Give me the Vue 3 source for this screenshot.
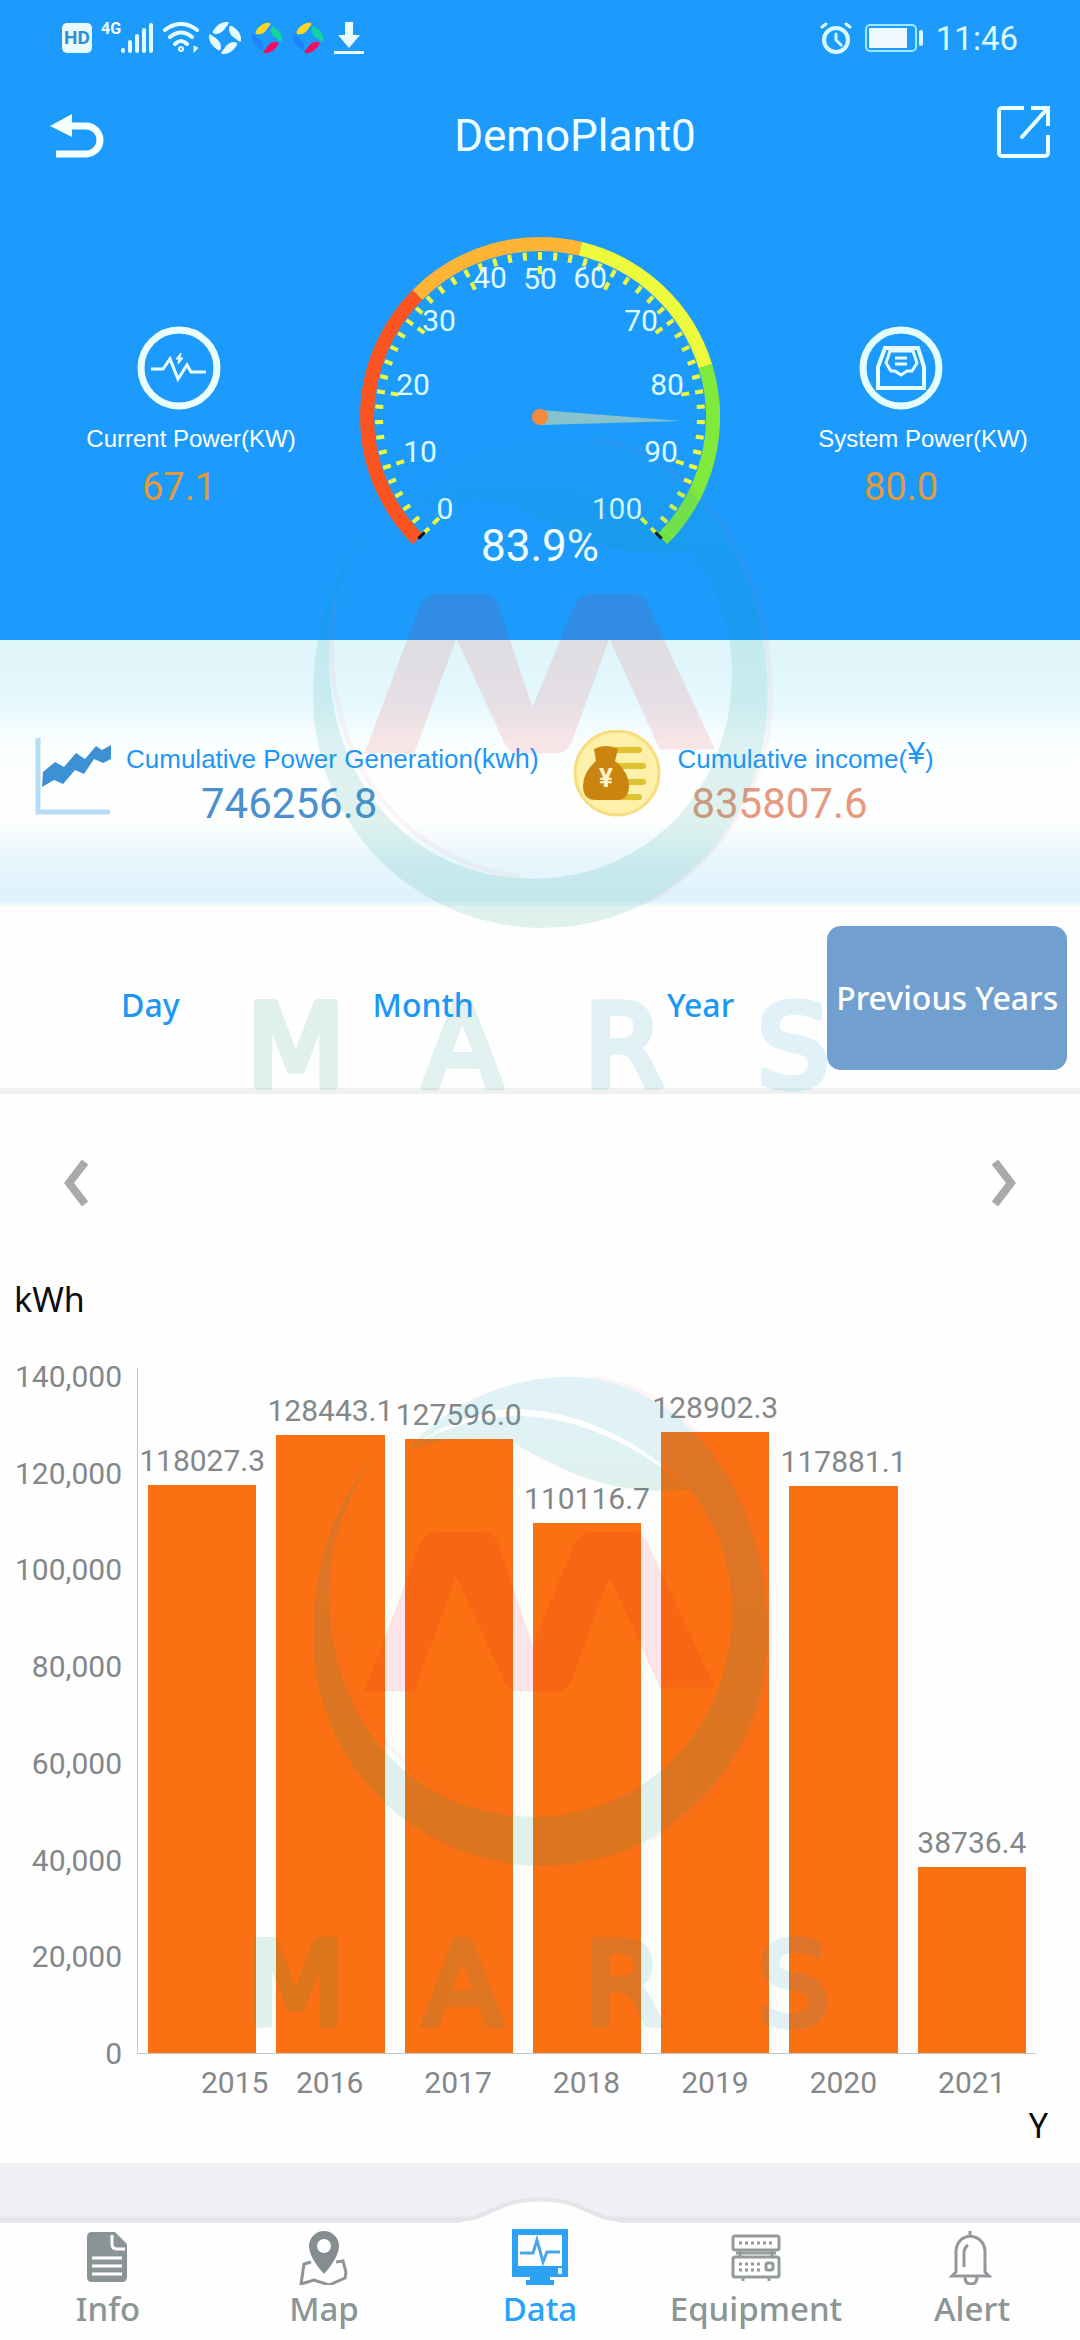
<script setup>
import { ref } from 'vue'

const tabs = ['Day', 'Month', 'Year', 'Previous Years']
const activeTab = ref('Previous Years')

const chartMax = 140000
const axisTicks = ['140,000', '120,000', '100,000', '80,000', '60,000', '40,000', '20,000', '0']
const years = [
  { year: '2015', value: 118027.3 },
  { year: '2016', value: 128443.1 },
  { year: '2017', value: 127596.0 },
  { year: '2018', value: 110116.7 },
  { year: '2019', value: 128902.3 },
  { year: '2020', value: 117881.1 },
  { year: '2021', value: 38736.4 },
]
const barHeight = (value) => ({ height: (value / chartMax) * 100 + '%' })

// Gauge geometry: 270 degrees from 0 (lower left) to 100 (lower right)
const centre = { x: 540, y: 417 }
function point(value, radius) {
  const a = ((value * 2.7 - 225) * Math.PI) / 180
  return [(centre.x + radius * Math.cos(a)).toFixed(1), (centre.y + radius * Math.sin(a)).toFixed(1)]
}
function arc(from, to) {
  const large = (to - from) * 2.7 > 180 ? 1 : 0
  return `M${point(from, 173)} A173 173 0 ${large} 1 ${point(to, 173)}`
}
function spoke(value, inner, outer) {
  return `M${point(value, outer)} L${point(value, inner)}`
}
const arcs = [
  { d: arc(0, 33.3), color: '#fc5420' },
  { d: arc(33.3, 55), color: '#ffb436' },
  { d: arc(55, 77), color: '#eefa3c' },
  { d: arc(77, 100), color: '#7fea3c' },
]
const minorTicks = Array.from({ length: 51 }, (_, i) => i * 2).filter((v) => v % 10).map((v) => spoke(v, 157, 165))
const majorTicks = Array.from({ length: 11 }, (_, i) => spoke(i * 10, 142, 165))
const endTicks = [spoke(0, 163, 172), spoke(100, 163, 172)]
const gaugeLabels = [
  [445, 519, 0], [420, 462, 10], [413, 395, 20], [439, 331, 30], [490, 288, 40], [540, 289, 50],
  [590, 288, 60], [641, 331, 70], [667, 395, 80], [661, 462, 90], [617, 519, 100],
]

const watermarks = ['first', 'second']
</script>

<template>
  <div class="screen">
    <header class="hero">
      <div class="status">
        <div class="status-left">
          <span class="hd">HD</span>
          <span class="net">4G</span>
          <svg width="33" height="32" viewBox="0 0 33 32" stroke="#e4fbff" stroke-width="4" stroke-linecap="round">
            <path d="M2 28v1M9 20v9M16 14v15M23 8v21M30 3v26" />
          </svg>
          <svg width="36" height="32" viewBox="0 0 36 32" fill="none" stroke="#e4fbff" stroke-width="4" stroke-linecap="round">
            <path d="M2 8Q18-4 34 8M7 15Q18 6 29 15M12 22Q18 16 24 22" />
            <circle cx="18" cy="27" r="1" />
            <path d="M31 30v-6l4 2-4 4" stroke-width="1" fill="#e4fbff" />
          </svg>
          <svg width="34" height="34" viewBox="0 0 34 34" fill="#e4fbff">
            <path d="M5 10Q11 0 20 1Q22 2 18 6Q14 13 8 13Q4 13 5 10Z" />
            <path d="M24 5Q34 11 33 20Q32 22 28 18Q21 14 21 8Q21 4 24 5Z" />
            <path d="M29 24Q23 34 14 33Q12 32 16 28Q20 21 26 21Q30 21 29 24Z" />
            <path d="M10 29Q0 23 1 14Q2 12 6 16Q13 20 13 26Q13 30 10 29Z" />
          </svg>
          <svg v-for="n in 2" :key="n" width="32" height="34" viewBox="0 0 34 34">
            <path fill="#fdd722" d="M5 10Q11 0 20 1Q22 2 18 6Q14 13 8 13Q4 13 5 10Z" />
            <path fill="#12d69c" d="M24 5Q34 11 33 20Q32 22 28 18Q21 14 21 8Q21 4 24 5Z" />
            <path fill="#f50d5b" d="M29 24Q23 34 14 33Q12 32 16 28Q20 21 26 21Q30 21 29 24Z" />
            <path fill="#1c84ff" d="M10 29Q0 23 1 14Q2 12 6 16Q13 20 13 26Q13 30 10 29Z" />
          </svg>
          <svg width="32" height="32" viewBox="0 0 32 32" fill="#e9fbff">
            <path d="M12 0h8v13h7L16 26 5 13h7zM1 29h30v3H1z" />
          </svg>
        </div>
        <div class="status-right">
          <svg width="32" height="32" viewBox="0 0 32 32" fill="none" stroke="#d8faff" stroke-width="4" stroke-linecap="round">
            <circle cx="16" cy="18" r="12" />
            <path d="M16 12v6l5 5M2 5l4-3M30 5l-4-3" stroke-width="3" />
          </svg>
          <svg width="58" height="28" viewBox="0 0 58 28" fill="none">
            <rect x="1" y="1" width="50" height="26" rx="4" stroke="#9fe6ff" stroke-width="2" />
            <rect x="4" y="4" width="38" height="20" fill="#edf9ff" />
            <rect x="54" y="6" width="4" height="16" rx="2" fill="#d8faff" />
          </svg>
          <span>11:46</span>
        </div>
      </div>

      <div class="title-bar">
        <button type="button" aria-label="Back">
          <svg width="54" height="44" viewBox="0 0 54 44">
            <path d="M0 12 22 0v23z" fill="#f4ffff" />
            <path d="M20 12h16a14 14 0 0 1 0 28H6" fill="none" stroke="#f4ffff" stroke-width="7" />
          </svg>
        </button>
        <h1>DemoPlant0</h1>
        <button type="button" class="share" aria-label="Share">
          <svg width="54" height="54" viewBox="0 0 54 54" fill="none" stroke="#eaffff" stroke-width="4">
            <path d="M28 3H6a3 3 0 0 0-3 3v42a3 3 0 0 0 3 3h43a3 3 0 0 0 3-3V30M35 3h17v18" />
            <path d="M51 4 26 32" stroke-linecap="round" />
          </svg>
        </button>
      </div>

      <div class="overview">
        <section class="metric">
          <svg width="84" height="84" viewBox="0 0 84 84" fill="none" stroke="#ecffff">
            <circle cx="42" cy="42" r="38" stroke-width="7" />
            <path d="M14 43h12l7-10 8 20 9-14 4 7h15" stroke-width="3" />
            <path d="M44 27l-5 6h3l-1 5 5-6h-3z" fill="#ecffff" stroke-width="1" />
          </svg>
          <span class="metric-label">Current Power(KW)</span>
          <strong>67.1</strong>
        </section>

        <svg class="gauge" viewBox="358 220 364 360" role="img" aria-label="Load 83.9%">
          <path v-for="a in arcs" :key="a.d" :d="a.d" :stroke="a.color" fill="none" stroke-width="14" />
          <path v-for="d in minorTicks" :key="d" :d="d" class="tick" />
          <path v-for="d in majorTicks" :key="d" :d="d" class="tick major" />
          <path v-for="d in endTicks" :key="d" :d="d" stroke="#101010" stroke-width="3" />
          <text v-for="[x, y, value] in gaugeLabels" :key="value" :x="x" :y="y" class="scale">{{ value }}</text>
          <path d="M540 410 681 421 540 425z" fill="#86c3cc" />
          <circle cx="540" cy="417" r="8" fill="#f58a3c" />
          <text x="540" y="561" class="percent">83.9%</text>
        </svg>

        <section class="metric system">
          <svg width="84" height="84" viewBox="0 0 84 84" fill="none" stroke="#e4fdff">
            <circle cx="42" cy="42" r="38" stroke-width="7" />
            <path d="M26 22h33l6 19v21H19V41z" stroke-width="4" />
            <path d="M31 25h23l4 12-5 8h-5l-6 4-6-4h-4l-5-8z" stroke-width="3" />
            <path d="M36 32h12M36 38h12" stroke-width="3" />
          </svg>
          <span class="metric-label">System Power(KW)</span>
          <strong>80.0</strong>
        </section>
      </div>
    </header>

    <section class="totals">
      <div class="total generation">
        <svg width="90" height="90" viewBox="0 0 90 90">
          <path d="M14 8v74h72" fill="none" stroke="#b5dcf3" stroke-width="5" />
          <path d="M19 42l12-10 9 5 12-14 9 6 11-13 6 4 9-5v14l-8 4-9-4-10 15-9-4-12 14-9-4-12 7z" fill="#3d90d4" />
        </svg>
        <div class="total-text">
          <span class="total-label">Cumulative Power Generation<span class="unit">(kwh)</span></span>
          <strong>746256.8</strong>
        </div>
      </div>
      <div class="total income">
        <svg width="90" height="90" viewBox="0 0 90 90">
          <circle cx="45" cy="43" r="42" fill="#fdf0a8" stroke="#f8dc7d" stroke-width="3" />
          <path d="M44 20h23M44 36h27M44 52h27M44 67h23" stroke="#dfc232" stroke-width="6" stroke-linecap="round" />
          <path d="M22 19q12-6 24 0l-3 12q14 11 14 25 0 14-13 14H24q-13 0-13-14 0-14 13-25z" fill="#c98510" />
          <text x="34" y="57" class="coin-sign">¥</text>
        </svg>
        <div class="total-text">
          <span class="total-label">Cumulative income(<span class="yen">¥</span>)</span>
          <strong>835807.6</strong>
        </div>
      </div>
    </section>

    <nav class="tabs" aria-label="Period">
      <button
        v-for="tab in tabs"
        :key="tab"
        type="button"
        :class="{ active: tab === activeTab }"
        @click="activeTab = tab"
      >{{ tab }}</button>
    </nav>

    <main>
      <div class="pager">
        <button type="button" aria-label="Previous">
          <svg width="24" height="46" viewBox="0 0 24 46"><path d="M21 2 5 23l16 21" fill="none" stroke="#a8abab" stroke-width="8" /></svg>
        </button>
        <button type="button" aria-label="Next">
          <svg width="24" height="46" viewBox="0 0 24 46"><path d="M3 2l16 21L3 44" fill="none" stroke="#a8abab" stroke-width="8" /></svg>
        </button>
      </div>
      <div class="y-title">kWh</div>
      <div class="chart">
        <div class="y-axis"><span v-for="t in axisTicks" :key="t">{{ t }}</span></div>
        <div class="plot">
          <div v-for="item in years" :key="item.year" class="column">
            <span class="bar-value">{{ item.value.toFixed(1) }}</span>
            <div class="bar" :style="barHeight(item.value)"></div>
          </div>
        </div>
        <div class="x-axis"><span v-for="item in years" :key="item.year">{{ item.year }}</span></div>
      </div>
      <div class="x-title">Y</div>
    </main>

    <div class="band">
      <svg width="160" height="26" viewBox="0 0 160 32" preserveAspectRatio="none">
        <path d="M0 29C28 29 36 4 80 4s52 25 80 25v3H0z" fill="#fefefe" />
        <path d="M0 28C28 28 36 3 80 3s52 25 80 25" fill="none" stroke="#e4e4e9" stroke-width="5" />
      </svg>
    </div>

    <nav class="bottom" aria-label="Sections">
      <a href="#info">
        <svg width="56" height="56" viewBox="0 0 56 56">
          <path d="M12 3h23l12 12v33q0 5-5 5H12q-5 0-5-5V8q0-5 5-5z" fill="#8a9496" />
          <path d="M32 6v9q0 5 5 5h8M12 29h30M12 37h30M12 45h30" fill="none" stroke="#fff" stroke-width="3" />
        </svg>
        Info
      </a>
      <a href="#map">
        <svg width="56" height="56" viewBox="0 0 56 56">
          <path d="M28 45Q13 28 13 17a15 15 0 0 1 30 0q0 11-15 28zM28 10a7 7 0 1 0 0 14 7 7 0 0 0 0-14z" fill="#868d91" fill-rule="evenodd" />
          <path d="M15 33l-7 2-3 20 13-4 15 5 16-7 1-6-3-11-7 1" fill="none" stroke="#8f9498" stroke-width="3" />
        </svg>
        Map
      </a>
      <a href="#data" class="current" aria-current="page">
        <svg width="56" height="56" viewBox="0 0 56 56">
          <path d="M0 0h56v48H0zM6 6v31h44V6z" fill="#2da1f2" fill-rule="evenodd" />
          <path d="M14 51h28v5H14zM18 48h20v4H18z" fill="#2da1f2" />
          <path d="M8 24h13l4-13 6 22 4-10h13" fill="none" stroke="#4ba7e2" stroke-width="3" />
          <rect x="46" y="39" width="4" height="6" fill="#e8f6ff" />
        </svg>
        Data
      </a>
      <a href="#equipment">
        <svg width="56" height="56" viewBox="0 0 56 56" fill="none" stroke="#94999a" stroke-width="3">
          <rect x="5" y="7" width="46" height="14" rx="2" />
          <rect x="5" y="28" width="46" height="20" rx="2" />
          <path d="M12 21v7M44 21v7M8 24h40M15 48v4M41 48v4" />
          <path d="M11 14h36M11 35h22M11 41h22" stroke-dasharray="3 3" />
          <rect x="38" y="34" width="7" height="7" rx="2" />
        </svg>
        Equipment
      </a>
      <a href="#alert">
        <svg width="56" height="56" viewBox="0 0 56 56" fill="none" stroke="#94989c" stroke-width="3">
          <path d="M26 2v5M12 43V22Q13 9 26 7q14 2 15 15v21l4 4H8z" />
          <path d="M20 38V24q0-5 4-8M21 48q0 7 6 7t6-7" />
        </svg>
        Alert
      </a>
    </nav>

    <svg v-for="w in watermarks" :key="w" class="watermark" :class="w" viewBox="0 0 1568 1568" aria-hidden="true">
      <defs>
        <linearGradient :id="w + '-ring'" x1="0" y1="0" x2="0" y2="1">
          <stop offset="0" stop-color="#14a0c8" />
          <stop offset="1" stop-color="#009b71" />
        </linearGradient>
        <linearGradient :id="w + '-word'" x1="0" y1="0" x2="1" y2="0">
          <stop offset="0" stop-color="#0f9b60" />
          <stop offset="1" stop-color="#0f9bd8" />
        </linearGradient>
      </defs>
      <g opacity="0.12">
        <path
          :fill="`url(#${w}-ring)`"
          d="M425 255C330 360 290 500 290 640c0 290 230 505 500 505 280 0 490-225 490-505C1280 330 1090 80 850 80 700 80 570 150 495 240c65-50 145-85 225-90 140 0 260 60 350 138 10 10 25 22 40 37 60 75 92 165 92 265 0 260-192 448-432 448C500 1038 325 820 325 560c0-120 35-220 100-305z"
        />
        <path :fill="`url(#${w}-ring)`" d="M495 240c75-50 165-75 245-75 130 5 250 60 370 160-140 15-250-20-390-105-80-10-150-5-225 20z" />
        <path fill="#e6141e" fill-opacity="0.85" d="M402 765 522 445Q534 418 560 418H660Q684 418 694 445L768 665 858 445Q870 418 895 418H985Q1010 418 1020 445L1165 757H1045L935 515 855 735Q845 765 820 765H740Q715 765 705 740L602 515 510 765Z" />
        <path fill="none" stroke="#e66478" stroke-opacity="0.5" stroke-width="10" d="M900 82C1120 110 1286 350 1286 640c0 200-110 360-270 450M340 420C285 760 480 1000 740 1034" />
        <text class="wordmark" y="1490" :fill="`url(#${w}-word)`" :stroke="`url(#${w}-word)`">
          <tspan x="252">M</tspan><tspan x="615">A</tspan><tspan x="966">R</tspan><tspan x="1336">S</tspan>
        </text>
      </g>
    </svg>
  </div>
</template>

<style>
body {
  margin: 0;
  background: #fefefe;
}
</style>

<style scoped>
.screen {
  position: relative;
  overflow: hidden;
  background: #fefefe;
  font-family: Roboto, "Liberation Sans", sans-serif;
}
.screen svg {
  display: block;
  flex-shrink: 0;
}
button {
  border: 0;
  padding: 0;
  background: none;
  font: inherit;
  cursor: pointer;
}
strong {
  font-weight: 400;
}

.hero {
  background: #1c9bfd;
  color: #f2ffff;
}
.status {
  display: flex;
  justify-content: space-between;
  align-items: center;
  height: 76px;
  padding: 0 62px;
}
.status-left,
.status-right {
  display: flex;
  align-items: center;
}
.status-left {
  gap: 9px;
}
.status-right {
  gap: 13px;
  font-size: 33px;
  color: #ddfbff;
}
.hd {
  width: 30px;
  height: 30px;
  border-radius: 5px;
  background: #e8f9ff;
  color: #2b8fd6;
  font-size: 19px;
  font-weight: 700;
  line-height: 30px;
  text-align: center;
}
.net {
  align-self: flex-start;
  margin-right: -9px;
  font-size: 16px;
  font-weight: 700;
  line-height: 16px;
}
.title-bar {
  display: flex;
  justify-content: space-between;
  align-items: center;
  height: 120px;
  padding: 0 30px 0 50px;
}
.title-bar h1 {
  margin: 0;
  padding-left: 50px;
  font-size: 44px;
  font-weight: 400;
}
.share {
  padding-bottom: 8px;
}
.overview {
  display: grid;
  grid-template-columns: 1fr 364px 1fr;
  padding: 24px 0 60px;
}
.gauge {
  width: 100%;
}
.tick {
  stroke: #eefa3c;
  stroke-width: 4px;
}
.major {
  stroke-dasharray: 8 6;
}
.scale {
  fill: #dffcff;
  font-size: 30px;
  text-anchor: middle;
}
.percent {
  fill: #f2ffff;
  font-size: 44px;
  text-anchor: middle;
}
.metric {
  display: flex;
  flex-direction: column;
  align-items: center;
  padding-top: 106px;
}
.metric-label {
  margin: 14px 0 12px;
  padding-left: 24px;
  color: #fff;
  font: 24px/30px "Liberation Sans", Arial, sans-serif;
}
.system .metric-label {
  padding-left: 44px;
}
.metric strong {
  color: #e39a3a;
  font-size: 38px;
  line-height: 42px;
}

.totals {
  display: grid;
  grid-template-columns: 53% 1fr;
  padding: 90px 0 80px;
  background: linear-gradient(#def5fa 0, #e4f8fd 22%, #fbfeff 40%, #fefefe 68%, #e8f6fd 82%, #def2fb 98%, #f4fafd 100%);
}
.total {
  display: flex;
  gap: 12px;
}
.generation {
  padding-left: 24px;
}
.income {
  gap: 15px;
}
.total-text {
  display: flex;
  flex-direction: column;
  padding-top: 13px;
}
.total-label {
  color: #1c97f7;
  font: 26px/32px "Liberation Sans", Arial, sans-serif;
  white-space: nowrap;
}
.unit {
  font-size: 27px;
}
.yen {
  font-size: 32px;
  line-height: 20px;
  vertical-align: 4px;
}
.total strong {
  padding-top: 7px;
  font-size: 42px;
  line-height: 44px;
}
.generation strong {
  padding-left: 75px;
  color: #4a90cf;
}
.income strong {
  padding-left: 14px;
  color: #e59a80;
}
.coin-sign {
  fill: #fff3c4;
  font-size: 26px;
  font-weight: 700;
  text-anchor: middle;
}

.tabs {
  display: flex;
  align-items: center;
  gap: 193px;
  padding: 20px 15px 18px 121px;
  border-bottom: 6px solid #f0f0f0;
  font: 500 32px/44px "Noto Sans", "Open Sans", sans-serif;
}
.tabs button {
  flex-shrink: 0;
  padding-top: 14px;
  color: #1c97f7;
  white-space: nowrap;
}
.tabs .active {
  width: 240px;
  height: 144px;
  margin-left: -100px;
  padding: 0;
  border-radius: 14px;
  background: #719fd0;
  color: #fff;
}

.pager {
  display: flex;
  justify-content: space-between;
  padding: 66px 64px 73px;
}
.y-title,
.x-title {
  color: #0c0c0c;
  font-family: "Noto Sans", "Open Sans", sans-serif;
  font-size: 34px;
}
.y-title {
  padding-left: 14px;
  line-height: 40px;
}
.x-title {
  padding: 6px 32px 20px;
  line-height: 36px;
  text-align: right;
}
.chart {
  display: grid;
  grid-template-columns: 122px minmax(0, 1fr);
  column-gap: 15px;
  padding: 49px 44px 0 0;
  color: #84878a;
  font-size: 30px;
}
.y-axis {
  display: flex;
  flex-direction: column;
  justify-content: space-between;
  padding-top: 9px;
  line-height: 0;
  text-align: right;
}
.plot {
  display: flex;
  height: 674px;
  padding-top: 11px;
  border-left: 1px solid #c4c6c6;
  border-bottom: 1px solid #c4c6c6;
}
.column {
  flex: 1;
  min-width: 0;
  display: flex;
  flex-direction: column;
  justify-content: flex-end;
  align-items: center;
  padding: 0 10px;
}
.bar-value {
  padding-bottom: 7px;
  line-height: 34px;
}
.bar {
  flex-shrink: 0;
  width: 100%;
  background: #fb7012;
}
.x-axis {
  grid-column: 2;
  display: grid;
  grid-template-columns: repeat(7, minmax(0, 1fr));
  padding-top: 11px;
  line-height: 36px;
  text-align: center;
}
.x-axis span:first-child {
  padding-left: 64px;
  text-align: left;
}

.band {
  display: flex;
  justify-content: center;
  align-items: flex-end;
  height: 60px;
  background: linear-gradient(#f1f1f1, #eeeef3 20%, #efeff5 88%, #e4e4e9 92%, #e6e6eb);
}
.bottom {
  display: flex;
  padding: 6px 0 12px;
}
.bottom a {
  flex: 1;
  display: flex;
  flex-direction: column;
  align-items: center;
  gap: 4px;
  color: #8b9595;
  font: 500 33px/40px "Noto Sans", "Open Sans", sans-serif;
  text-decoration: none;
}
.bottom .current {
  color: #27a3fd;
}

.watermark {
  position: absolute;
  left: 16.667%;
  width: 66.667%;
  pointer-events: none;
}
.first {
  top: 402px;
}
.second {
  top: 1340px;
}
.wordmark {
  font-family: "DejaVu Sans", sans-serif;
  font-size: 250px;
  stroke-width: 16px;
  stroke-linejoin: round;
  text-anchor: middle;
}
</style>
